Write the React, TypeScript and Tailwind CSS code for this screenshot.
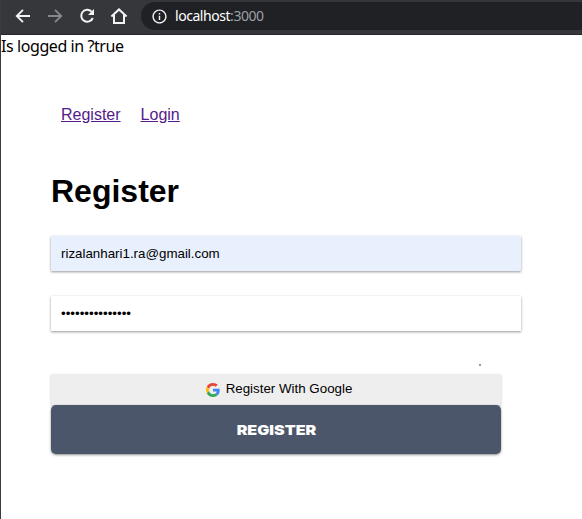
import React from "react";
import { MdInfoOutline } from "react-icons/md";

function ArrowIcon({ className = "" }: { className?: string }) {
  return (
    <svg className={className} width="20" height="20" viewBox="0 0 20 20" fill="none" stroke="currentColor" strokeWidth="1.9">
      <path d="M17 10H4.2M10 3.8 3.8 10l6.2 6.2" />
    </svg>
  );
}

function ReloadIcon() {
  return (
    <svg className="ml-[12px]" width="20" height="20" viewBox="0 0 20 20" fill="none">
      <path d="M14.6 5.6A6 6 0 1 0 15.8 12" stroke="currentColor" strokeWidth="2" />
      <path d="M17 3v6h-6z" fill="currentColor" />
    </svg>
  );
}

function HomeIcon() {
  return (
    <svg className="ml-[13px]" width="18" height="18" viewBox="0 0 18 18" fill="none" stroke="currentColor" strokeWidth="2">
      <path d="M1.4 9.6 9 2.4l7.6 7.2M4 8v8.1h10V8" />
    </svg>
  );
}

function GoogleIcon() {
  return (
    <svg className="mt-[2px] mr-[6px] shrink-0" width="14" height="14" viewBox="0 0 48 48">
      <path fill="#EA4335" d="M24 9.5c3.54 0 6.71 1.22 9.21 3.6l6.85-6.85C35.9 2.38 30.47 0 24 0 14.62 0 6.51 5.38 2.56 13.22l7.98 6.19C12.43 13.72 17.74 9.5 24 9.5z" />
      <path fill="#4285F4" d="M46.98 24.55c0-1.57-.15-3.09-.38-4.55H24v9.02h12.94c-.58 2.96-2.26 5.48-4.78 7.18l7.73 6c4.51-4.18 7.09-10.36 7.09-17.65z" />
      <path fill="#FBBC05" d="M10.53 28.59c-.48-1.45-.76-2.99-.76-4.59s.27-3.14.76-4.59l-7.98-6.19C.92 16.46 0 20.12 0 24c0 3.88.92 7.54 2.56 10.78l7.97-6.19z" />
      <path fill="#34A853" d="M24 48c6.48 0 11.93-2.13 15.89-5.81l-7.73-6c-2.15 1.45-4.92 2.3-8.16 2.3-6.26 0-11.57-4.22-13.47-9.91l-7.98 6.19C6.51 42.62 14.62 48 24 48z" />
    </svg>
  );
}

function BrowserBar() {
  return (
    <header className="flex h-[35px] items-start border-b border-[#28272b] bg-[#36373b] text-[#f1f3f4]">
      <div className="flex h-8 w-[140px] shrink-0 items-center pl-[12px]">
        <ArrowIcon />
        <ArrowIcon className="ml-[12px] rotate-180 text-[#86878a]" />
        <ReloadIcon />
        <HomeIcon />
      </div>
      <div className="mt-[2px] flex h-[28px] flex-1 items-center rounded-l-full bg-[#202124] pl-[10px]">
        <MdInfoOutline size={17} />
        <span className="ml-[7px] font-['Noto_Sans',sans-serif] text-[14px] leading-5 tracking-[-0.45px] text-white">
          localhost<span className="text-[#9aa0a6]">:3000</span>
        </span>
      </div>
    </header>
  );
}

const field =
  "block h-[35px] w-[470px] px-[10px] text-[13.333px] text-black shadow-[0_1px_3px_rgba(0,0,0,0.2),0_1px_2px_rgba(0,0,0,0.24)] outline-none";

export default function App() {
  return (
    <div className="h-[519px] overflow-hidden border-l border-[#3c3b3f] bg-white font-['Liberation_Sans',Arial,sans-serif] text-black">
      <BrowserBar />
      <p className="h-6 font-['Noto_Sans',sans-serif] text-[16px] leading-[22px] tracking-[-0.42px]">Is logged in ?true</p>
      <main className="pl-[50px]">
        <nav className="flex gap-[20px] pt-[46px] pl-[10px] text-[16px] leading-[20px] text-[#551a8b]">
          <a className="underline" href="#register">Register</a>
          <a className="underline" href="#login">Login</a>
        </nav>
        <h1 className="mt-[48px] text-[32px] leading-[37px] font-bold">Register</h1>
        <form className="mt-[26px]">
          <input className={`${field} bg-[#e8f0fe]`} type="text" defaultValue="rizalanhari1.ra@gmail.com" />
          <input className={`${field} mt-[25px] bg-white`} type="text" defaultValue="•••••••••••••••" />
          <div className="flex h-[43px] w-[450px] justify-end pt-[33px] pr-[20px]">
            <span className="size-[2px] bg-[#999]" />
          </div>
          <button
            type="button"
            className="flex h-[31px] w-[450px] items-center justify-center bg-[#eee] pb-px pl-[6px] text-[13.333px] shadow-[0_1px_2px_rgba(0,0,0,0.25)]"
          >
            <GoogleIcon />
            Register With Google
          </button>
          <button
            type="button"
            className="relative block h-[49px] w-[450px] rounded-[5px] bg-[#4c566a] pt-[2px] font-['Inter',sans-serif] text-[13.5px] font-black text-white shadow-[0_1px_3px_rgba(0,0,0,0.25),0_1px_2px_rgba(0,0,0,0.24)]"
          >
            <span className="inline-block scale-x-[1.19]">REGISTER</span>
          </button>
        </form>
      </main>
    </div>
  );
}
